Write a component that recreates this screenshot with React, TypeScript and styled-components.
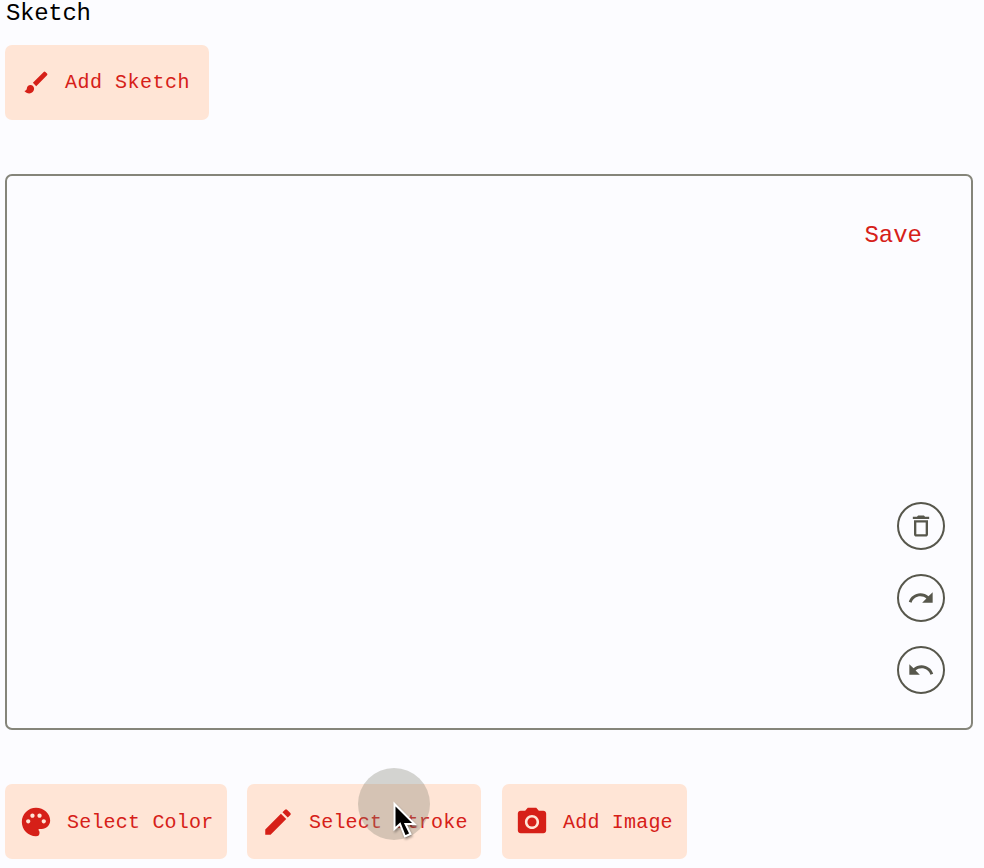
import React from "react";
import styled, { createGlobalStyle } from "styled-components";
import { MdPalette, MdEdit, MdCameraAlt } from "react-icons/md";

const red = "#d62018";
const ink = "#57574c";

const GlobalStyle = createGlobalStyle`
  * { box-sizing: border-box; }
  body { margin: 0; background: #fcfcff; overflow: hidden; }
`;

const Page = styled.main`
  position: relative;
  width: 984px;
  height: 868px;
  padding: 0 11px 0 5px;
  overflow: hidden;
  display: flex;
  flex-direction: column;
  background: #fcfcff;
`;

const Heading = styled.h1`
  margin: 0 0 0 1px;
  padding-top: 1px;
  height: 45px;
  font: 400 24px/26px "Liberation Mono", monospace;
  letter-spacing: -0.3px;
  color: #000;
`;

const ActionButton = styled.button<{ $width: number; $pad?: number }>`
  display: flex;
  align-items: center;
  flex: none;
  width: ${(p) => p.$width}px;
  height: 75px;
  padding: 0 0 0 ${(p) => p.$pad ?? 14}px;
  border: 0;
  border-radius: 7px;
  background: #ffe5d6;
  color: ${red};
  white-space: pre;
`;

const ButtonText = styled.span<{ $spacing?: number; $drop?: number }>`
  margin-left: 14px;
  padding-top: ${(p) => p.$drop ?? 2}px;
  font: 400 20px/24px "Liberation Mono", monospace;
  letter-spacing: ${(p) => p.$spacing ?? 0.2}px;
`;

const Canvas = styled.section`
  display: flex;
  flex-direction: column;
  align-items: flex-end;
  justify-content: space-between;
  flex: none;
  width: 968px;
  height: 556px;
  margin: 54px 0;
  padding: 46px 26px 34px 0;
  border: 2px solid #85857a;
  border-radius: 7px;
`;

const SaveButton = styled.button`
  margin: 0 23px 0 0;
  padding: 0;
  border: 0;
  background: none;
  color: ${red};
  font: 400 24px/28px "Liberation Mono", monospace;
`;

const Tools = styled.div`
  display: flex;
  flex-direction: column;
  gap: 24px;
`;

const RoundButton = styled.button`
  display: grid;
  place-items: center;
  width: 48px;
  height: 48px;
  padding: 0;
  border: 2px solid ${ink};
  border-radius: 50%;
  background: none;
  color: ${ink};
`;

const Actions = styled.div`
  display: flex;
  gap: 20px;

  & > :last-child { margin-left: 1px; }
`;

const TouchPoint = styled.div`
  position: absolute;
  left: 358px;
  top: 768px;
  width: 72px;
  height: 72px;
  border-radius: 50%;
  background: rgba(126, 126, 112, 0.33);
`;

const Cursor = styled.svg`
  position: absolute;
  left: 390px;
  top: 799px;
  overflow: visible;
  filter: drop-shadow(1px 2px 1px rgba(0, 0, 0, 0.35));
`;

export default function App() {
  return (
    <>
      <GlobalStyle />
      <Page>
        <Heading>Sketch</Heading>
        <ActionButton $width={204} $pad={17}>
          <svg width="29" height="29" viewBox="0 0 24 24" fill="currentColor">
            <path d="M7 14c-1.66 0-3 1.34-3 3 0 1.31-1.16 2-2 2 .92 1.22 2.49 2 4 2 2.21 0 4-1.79 4-4 0-1.66-1.34-3-3-3zm13.71-9.37l-1.34-1.34a.996.996 0 0 0-1.41 0L9 12.25 11.75 15l8.96-8.96a.996.996 0 0 0 0-1.41z" />
          </svg>
          <ButtonText $spacing={0.5} $drop={1}>Add Sketch</ButtonText>
        </ActionButton>
        <Canvas>
          <SaveButton>Save</SaveButton>
          <Tools>
            <RoundButton aria-label="Clear">
              <svg width="28" height="28" viewBox="0 0 24 24" fill="currentColor">
                <path d="M6 19c0 1.1.9 2 2 2h8c1.1 0 2-.9 2-2V7H6v12zM8 9h8v10H8V9zm7.5-5l-1-1h-5l-1 1H5v2h14V4z" />
              </svg>
            </RoundButton>
            <RoundButton aria-label="Redo">
              <svg width="28" height="28" viewBox="0 0 24 24" fill="currentColor">
                <path d="M18.4 10.6C16.55 8.99 14.15 8 11.5 8c-4.65 0-8.58 3.03-9.96 7.22L3.9 16c1.05-3.19 4.05-5.5 7.6-5.5 1.95 0 3.73.72 5.12 1.88L13 16h9V7l-3.6 3.6z" />
              </svg>
            </RoundButton>
            <RoundButton aria-label="Undo">
              <svg width="28" height="28" viewBox="0 0 24 24" fill="currentColor">
                <path d="M12.5 8c-2.65 0-5.05.99-6.9 2.6L2 7v9h9l-3.62-3.62c1.39-1.16 3.16-1.88 5.12-1.88 3.54 0 6.55 2.31 7.6 5.5l2.37-.78C21.08 11.03 17.15 8 12.5 8z" />
              </svg>
            </RoundButton>
          </Tools>
        </Canvas>
        <Actions>
          <ActionButton $width={222}>
            <MdPalette size={34} />
            <ButtonText>Select Color</ButtonText>
          </ActionButton>
          <ActionButton $width={234}>
            <MdEdit size={34} />
            <ButtonText>Select Stroke</ButtonText>
          </ActionButton>
          <ActionButton $width={185} $pad={13}>
            <MdCameraAlt size={34} />
            <ButtonText>Add Image</ButtonText>
          </ActionButton>
        </Actions>
        <TouchPoint />
        <Cursor width="26" height="42" viewBox="0 0 26 42">
          <path d="M4.5 5v25l5.5-5 5 12.5 5.5-2.5-5-10h9z" fill="#000" stroke="#fff" strokeWidth="2" />
        </Cursor>
      </Page>
    </>
  );
}
